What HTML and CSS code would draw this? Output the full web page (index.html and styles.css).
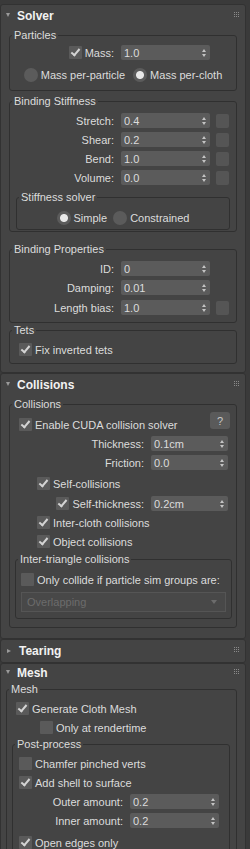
FILE: index.html
```html
<!DOCTYPE html>
<html>

<head>
    <meta charset="UTF-8">
    <title>Cloth Modifier</title>
    <link rel="stylesheet" href="styles.css">
</head>

<body>

    <div class="rollout solver">
        <div class="rollout-head">
            <span class="tri"></span>
            <span class="rollout-title">Solver</span>
            <span class="grip"></span>
        </div>
        <div class="rollout-body">
            <fieldset class="group particles">
                <legend>Particles</legend>
                <div class="prop">
                    <div class="lbl"><span class="check on"></span>Mass:</div>
                    <div class="spin">1.0<span class="arr"></span></div>
                </div>
                <div class="radios">
                    <span class="opt"><span class="radio"></span>Mass per-particle</span>
                    <span class="opt"><span class="radio on"></span>Mass per-cloth</span>
                </div>
            </fieldset>

            <fieldset class="group stiffness">
                <legend>Binding Stiffness</legend>
                <div class="prop">
                    <div class="lbl">Stretch:</div>
                    <div class="spin">0.4<span class="arr"></span></div>
                    <span class="square"></span>
                </div>
                <div class="prop">
                    <div class="lbl">Shear:</div>
                    <div class="spin">0.2<span class="arr"></span></div>
                    <span class="square"></span>
                </div>
                <div class="prop">
                    <div class="lbl">Bend:</div>
                    <div class="spin">1.0<span class="arr"></span></div>
                    <span class="square"></span>
                </div>
                <div class="prop">
                    <div class="lbl">Volume:</div>
                    <div class="spin">0.0<span class="arr"></span></div>
                    <span class="square"></span>
                </div>
                <fieldset class="group sub solver-type">
                    <legend>Stiffness solver</legend>
                    <div class="radios tight">
                        <span class="opt"><span class="radio on"></span>Simple</span>
                        <span class="opt"><span class="radio"></span>Constrained</span>
                    </div>
                </fieldset>
            </fieldset>

            <fieldset class="group binding">
                <legend>Binding Properties</legend>
                <div class="prop">
                    <div class="lbl">ID:</div>
                    <div class="spin">0<span class="arr"></span></div>
                </div>
                <div class="prop">
                    <div class="lbl">Damping:</div>
                    <div class="spin">0.01<span class="arr"></span></div>
                </div>
                <div class="prop bias">
                    <div class="lbl">Length bias:</div>
                    <div class="spin">1.0<span class="arr"></span></div>
                    <span class="square"></span>
                </div>
            </fieldset>

            <fieldset class="group tets">
                <legend>Tets</legend>
                <div class="chk-row"><span class="check on"></span>Fix inverted tets</div>
            </fieldset>
        </div>
    </div>

    <div class="rollout collisions">
        <div class="rollout-head">
            <span class="tri"></span>
            <span class="rollout-title">Collisions</span>
            <span class="grip"></span>
        </div>
        <div class="rollout-body">
            <fieldset class="group coll">
                <legend>Collisions</legend>
                <div class="chk-row cuda">
                    <span class="check on"></span>Enable CUDA collision solver
                    <span class="help">?</span>
                </div>
                <div class="prop wide">
                    <div class="lbl">Thickness:</div>
                    <div class="spin">0.1cm<span class="arr"></span></div>
                </div>
                <div class="prop wide">
                    <div class="lbl">Friction:</div>
                    <div class="spin">0.0<span class="arr"></span></div>
                </div>
                <div class="chk-row indent self-coll"><span class="check on"></span>Self-collisions</div>
                <div class="prop wide self-thick">
                    <div class="lbl"><span class="check on"></span>Self-thickness:</div>
                    <div class="spin">0.2cm<span class="arr"></span></div>
                </div>
                <div class="chk-row indent"><span class="check on"></span>Inter-cloth collisions</div>
                <div class="chk-row indent"><span class="check on"></span>Object collisions</div>

                <fieldset class="group sub tri-coll">
                    <legend>Inter-triangle collisions</legend>
                    <div class="chk-row"><span class="check"></span>Only collide if particle sim groups are:</div>
                    <div class="dropdown">Overlapping<span class="drop-arr"></span></div>
                </fieldset>
            </fieldset>
        </div>
    </div>

    <div class="rollout tearing">
        <div class="rollout-head">
            <span class="tri closed"></span>
            <span class="rollout-title">Tearing</span>
            <span class="grip"></span>
        </div>
    </div>

    <div class="rollout mesh">
        <div class="rollout-head">
            <span class="tri"></span>
            <span class="rollout-title">Mesh</span>
            <span class="grip"></span>
        </div>
        <div class="rollout-body">
            <fieldset class="group mesh-grp">
                <legend>Mesh</legend>
                <div class="chk-row"><span class="check on"></span>Generate Cloth Mesh</div>
                <div class="chk-row render"><span class="check"></span>Only at rendertime</div>

                <fieldset class="group sub post">
                    <legend>Post-process</legend>
                    <div class="chk-row"><span class="check"></span>Chamfer pinched verts</div>
                    <div class="chk-row"><span class="check on"></span>Add shell to surface</div>
                    <div class="prop amount">
                        <div class="lbl">Outer amount:</div>
                        <div class="spin">0.2<span class="arr"></span></div>
                    </div>
                    <div class="prop amount">
                        <div class="lbl">Inner amount:</div>
                        <div class="spin">0.2<span class="arr"></span></div>
                    </div>
                    <div class="chk-row open"><span class="check on"></span>Open edges only</div>
                </fieldset>
            </fieldset>
        </div>
    </div>

</body>

</html>
```

FILE: styles.css
```css
body {
    margin: 0;
    padding: 4px 0 0 0;
    background: #3a3a3a;
    font-family: "Liberation Sans", Arial, sans-serif;
    font-size: 11px;
    color: #dcdcdc;
    overflow: hidden;
}

/* rollouts */

.rollout {
    width: 244px;
    background: #444444;
    border: 1px solid #323232;
    border-radius: 3px;
}

.rollout-head {
    height: 22px;
    display: flex;
    align-items: center;
    padding-left: 5px;
}

.tri {
    width: 0;
    height: 0;
    border-left: 2.5px solid transparent;
    border-right: 2.5px solid transparent;
    border-top: 4px solid #9a9a9a;
    margin-right: 7px;
    margin-bottom: 2px;
}

.tri.closed {
    border-top: 2.5px solid transparent;
    border-bottom: 2.5px solid transparent;
    border-left: 4px solid #9a9a9a;
    border-right: 0;
    margin-right: 8px;
    margin-left: 1px;
    margin-bottom: 0;
}

.rollout-title {
    font-weight: bold;
    font-size: 12px;
    color: #f2f2f2;
}

.grip {
    width: 1px;
    height: 1px;
    margin-left: auto;
    margin-right: 10px;
    margin-bottom: 8px;
    background: #8a8a8a;
    box-shadow: 2px 0 #8a8a8a, 4px 0 #8a8a8a,
        0 2px #8a8a8a, 2px 2px #8a8a8a, 4px 2px #8a8a8a,
        0 4px #8a8a8a, 2px 4px #8a8a8a, 4px 4px #8a8a8a;
}

.rollout-body {
    padding: 1px 8px 8px 8px;
}

/* group boxes */

.group {
    margin: 0;
    padding: 0;
    border: 1px solid #303030;
    border-radius: 3px;
    min-width: 0;
}

.group legend {
    margin-left: 2px;
    padding: 0 2px;
    line-height: 14px;
    height: 14px;
    color: #dcdcdc;
}

.particles {
    padding: 1px 0 6px;
}

.stiffness {
    margin-top: 3px;
    padding-top: 3px;
}

.sub.solver-type {
    margin: 3px 6px 1px;
    padding: 4px 0 2px;
}

.binding {
    margin-top: 10px;
    padding: 3px 0 5px;
}

.binding .bias {
    margin-top: 1px;
}

.tets {
    padding: 3px 0 4px;
}

/* rows */

.prop {
    display: flex;
    align-items: center;
    height: 19px;
}

.prop .lbl {
    width: 104px;
    margin-right: 7px;
    display: flex;
    justify-content: flex-end;
    align-items: center;
    gap: 3px;
    white-space: nowrap;
}

.spin {
    width: 89px;
    height: 15px;
    box-sizing: border-box;
    padding: 0 4px 0 3px;
    background: #5b5b5b;
    border-radius: 2px;
    display: flex;
    align-items: center;
    justify-content: space-between;
    color: #dcdcdc;
}

.arr {
    display: flex;
    flex-direction: column;
    gap: 2px;
}

.arr::before,
.arr::after {
    content: "";
    width: 0;
    height: 0;
    border-left: 2.5px solid transparent;
    border-right: 2.5px solid transparent;
}

.arr::before {
    border-bottom: 3px solid #c4c4c4;
}

.arr::after {
    border-top: 3px solid #c4c4c4;
}

.square {
    width: 13px;
    height: 14px;
    margin-left: 6px;
    background: #555555;
    border-radius: 2px;
}

.chk-row {
    display: flex;
    align-items: center;
    gap: 3px;
    height: 19px;
    padding-left: 9px;
    white-space: nowrap;
}

.check {
    position: relative;
    width: 13px;
    height: 13px;
    flex: none;
    background: #5a5a5a;
    border-radius: 1px;
}

.check.on::after {
    content: "";
    position: absolute;
    left: 4px;
    top: 1px;
    width: 3px;
    height: 7px;
    border-right: 2px solid #d4d4d4;
    border-bottom: 2px solid #d4d4d4;
    transform: rotate(40deg);
}

.radios {
    display: flex;
    justify-content: center;
    gap: 8px;
    height: 19px;
    align-items: center;
    margin-top: 3px;
}

.radios.tight {
    gap: 6px;
    margin-top: 0;
}

.opt {
    display: flex;
    align-items: center;
    gap: 3px;
}

.radio {
    width: 14px;
    height: 14px;
    border-radius: 50%;
    background: #5b5b5b;
}

.radio.on {
    background: radial-gradient(circle, #e8e8e8 0 3.5px, #5b5b5b 4.5px);
}

/* collisions */

.coll {
    padding-top: 4px;
}

.cuda .help {
    align-self: flex-start;
    margin: -3px 6px 0 auto;
    width: 20px;
    height: 17px;
    background: #5a5a5a;
    border-radius: 3px;
    color: #c8c8c8;
    display: flex;
    align-items: center;
    justify-content: center;
}

.prop.wide .lbl {
    width: 134px;
}

.prop.wide .spin {
    width: 77px;
}

.chk-row.indent {
    padding-left: 27px;
}

.self-coll {
    margin-top: 2px;
}

.self-thick {
    margin-top: 1px;
}

.sub.tri-coll {
    margin: 1px 4px 8px 5px;
    padding: 4px 0 6px;
}

.tri-coll .chk-row {
    padding-left: 5px;
}

.dropdown {
    margin: 3px 0 0 5px;
    width: 205px;
    height: 20px;
    box-sizing: border-box;
    padding: 0 8px 0 5px;
    border: 1px solid #555555;
    background: #484848;
    color: #6c6c6c;
    display: flex;
    align-items: center;
    justify-content: space-between;
}

.drop-arr {
    width: 0;
    height: 0;
    border-left: 3px solid transparent;
    border-right: 3px solid transparent;
    border-top: 4px solid #6c6c6c;
}

.collisions .rollout-body {
    padding-bottom: 10px;
}

/* mesh */

.mesh .rollout-head {
    height: 18px;
}

.mesh .rollout-body {
    padding: 0 8px 8px 5px;
}

.mesh-grp {
    padding-top: 3px;
}

.render {
    padding-left: 33px;
}

.sub.post {
    margin: 0 6px 0 5px;
    padding-top: 3px;
    padding-bottom: 10px;
}

.post .chk-row {
    padding-left: 6px;
}

.prop.amount .lbl {
    width: 110px;
}

.post .open {
    margin-top: 3px;
}
```
